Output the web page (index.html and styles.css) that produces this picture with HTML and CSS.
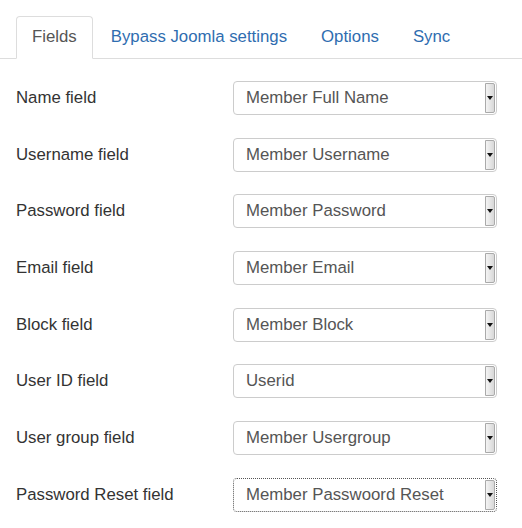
FILE: index.html
```html
<!DOCTYPE html>
<html>
<head>
<meta charset="utf-8">
<link rel="stylesheet" href="styles.css">
</head>
<body>
<div class="page">
  <ul class="tabs">
    <li class="tab active">Fields</li>
    <li class="tab">Bypass Joomla settings</li>
    <li class="tab">Options</li>
    <li class="tab">Sync</li>
  </ul>
  <div class="form">
    <div class="row"><div class="label">Name field</div><div class="select"><span class="value">Member Full Name</span><span class="btn"><span class="arrow"></span></span></div></div>
    <div class="row"><div class="label">Username field</div><div class="select"><span class="value">Member Username</span><span class="btn"><span class="arrow"></span></span></div></div>
    <div class="row"><div class="label">Password field</div><div class="select"><span class="value">Member Password</span><span class="btn"><span class="arrow"></span></span></div></div>
    <div class="row"><div class="label">Email field</div><div class="select"><span class="value">Member Email</span><span class="btn"><span class="arrow"></span></span></div></div>
    <div class="row"><div class="label">Block field</div><div class="select"><span class="value">Member Block</span><span class="btn"><span class="arrow"></span></span></div></div>
    <div class="row"><div class="label">User ID field</div><div class="select"><span class="value">Userid</span><span class="btn"><span class="arrow"></span></span></div></div>
    <div class="row"><div class="label">User group field</div><div class="select"><span class="value">Member Usergroup</span><span class="btn"><span class="arrow"></span></span></div></div>
    <div class="row"><div class="label">Password Reset field</div><div class="select focused"><span class="value">Member Passwoord Reset</span><span class="btn"><span class="arrow"></span></span></div></div>
  </div>
</div>
</body>
</html>
```
FILE: styles.css
```css
html, body {
  margin: 0;
  padding: 0;
  background: #fff;
}
.page {
  font-family: "Liberation Sans", Arial, Helvetica, sans-serif;
  font-size: 16.8px;
  padding-top: 16px;
}
.tabs {
  list-style: none;
  margin: 0;
  padding: 0 0 0 16px;
  display: flex;
  border-bottom: 1px solid #ddd;
  height: 42px;
}
.tab {
  height: 42px;
  box-sizing: border-box;
  padding: 0 15px;
  margin-right: 2px;
  line-height: 40px;
  color: #2f6db0;
  border: 1px solid transparent;
  border-radius: 4px 4px 0 0;
}
.tab.active {
  color: #555;
  border-color: #ddd;
  border-bottom-color: #fff;
  height: 43px;
}
.form {
  padding: 22px 25px 0 16px;
}
.row {
  display: flex;
  align-items: center;
  height: 34px;
  margin-bottom: 22.7px;
}
.label {
  width: 217px;
  color: #333;
}
.select {
  width: 264px;
  height: 34px;
  box-sizing: border-box;
  border: 1px solid #ccc;
  border-radius: 4px;
  display: flex;
  align-items: center;
  padding-left: 12px;
  color: #555;
}
.select.focused {
  border: 1px dotted #555;
}
.value {
  flex: 1;
}
.btn {
  width: 10px;
  height: 30px;
  box-sizing: border-box;
  border: 1px solid #aaa;
  border-radius: 0 2px 2px 0;
  background: linear-gradient(to right, #f4f4f4, #d8d8d8);
  display: flex;
  align-items: center;
  justify-content: center;
  margin-right: 1px;
}
.arrow {
  width: 0;
  height: 0;
  border-left: 3px solid transparent;
  border-right: 3px solid transparent;
  border-top: 4px solid #111;
}
```
